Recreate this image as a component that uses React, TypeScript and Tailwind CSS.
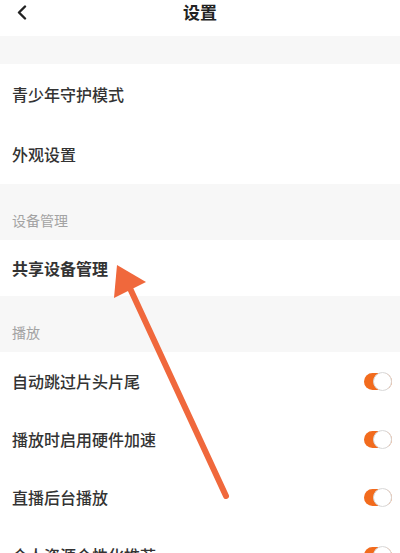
import React from "react";

const font = { fontFamily: '"Noto Sans CJK SC", "Noto Sans", sans-serif' };

function Toggle() {
  return (
    <div className="relative w-[28px] h-[17px] rounded-full bg-[#f26b1d]">
      <div className="absolute right-0 top-[-1px] w-[19px] h-[19px] rounded-full bg-white border border-[#d9d9d9]" />
    </div>
  );
}

function Row({ label, toggle, h = "h-[60px]", bold = false }: { label: string; toggle?: boolean; h?: string; bold?: boolean }) {
  return (
    <div className={`${h} flex items-center justify-between pl-3 pr-[8px] bg-white`}>
      <span className={`text-[16px] text-[#333] ${bold ? "font-semibold" : "font-medium"}`}>{label}</span>
      {toggle && <Toggle />}
    </div>
  );
}

function SectionHeader({ label }: { label: string }) {
  return (
    <div className="h-[56px] flex items-end pb-[9px] px-3 bg-[#f7f7f7]">
      <span className="text-[14px] text-[#a3a3a3]">{label}</span>
    </div>
  );
}

export default function App() {
  return (
    <div className="relative w-[400px] h-[553px] overflow-hidden bg-[#f7f7f7]" style={font}>
      <div className="h-[36px] bg-white relative flex justify-center">
        <svg className="absolute left-[16px] top-[5px]" width="12" height="15" viewBox="0 0 12 15">
          <path d="M9 1.5 L3 7.5 L9 13.5" fill="none" stroke="#222" strokeWidth="2.4" strokeLinecap="round" strokeLinejoin="round" />
        </svg>
        <span className="mt-[1px] leading-[22px] text-[17px] font-bold text-[#222]">设置</span>
      </div>
      <div className="h-[28px]" />
      <Row label="青少年守护模式" />
      <Row label="外观设置" />
      <SectionHeader label="设备管理" />
      <Row label="共享设备管理" h="h-[56px]" bold />
      <SectionHeader label="播放" />
      <Row label="自动跳过片头片尾" toggle h="h-[58px]" />
      <Row label="播放时启用硬件加速" toggle h="h-[58px]" />
      <Row label="直播后台播放" toggle h="h-[58px]" />
      <Row label="个人资源个性化推荐" toggle h="h-[58px]" />
      <svg className="absolute left-0 top-0 pointer-events-none" width="400" height="553" viewBox="0 0 400 553">
        <line x1="226" y1="496" x2="128" y2="284" stroke="#f0683c" strokeWidth="6" strokeLinecap="round" />
        <polygon points="117,265 146,282 114,298" fill="#f0683c" />
      </svg>
    </div>
  );
}
